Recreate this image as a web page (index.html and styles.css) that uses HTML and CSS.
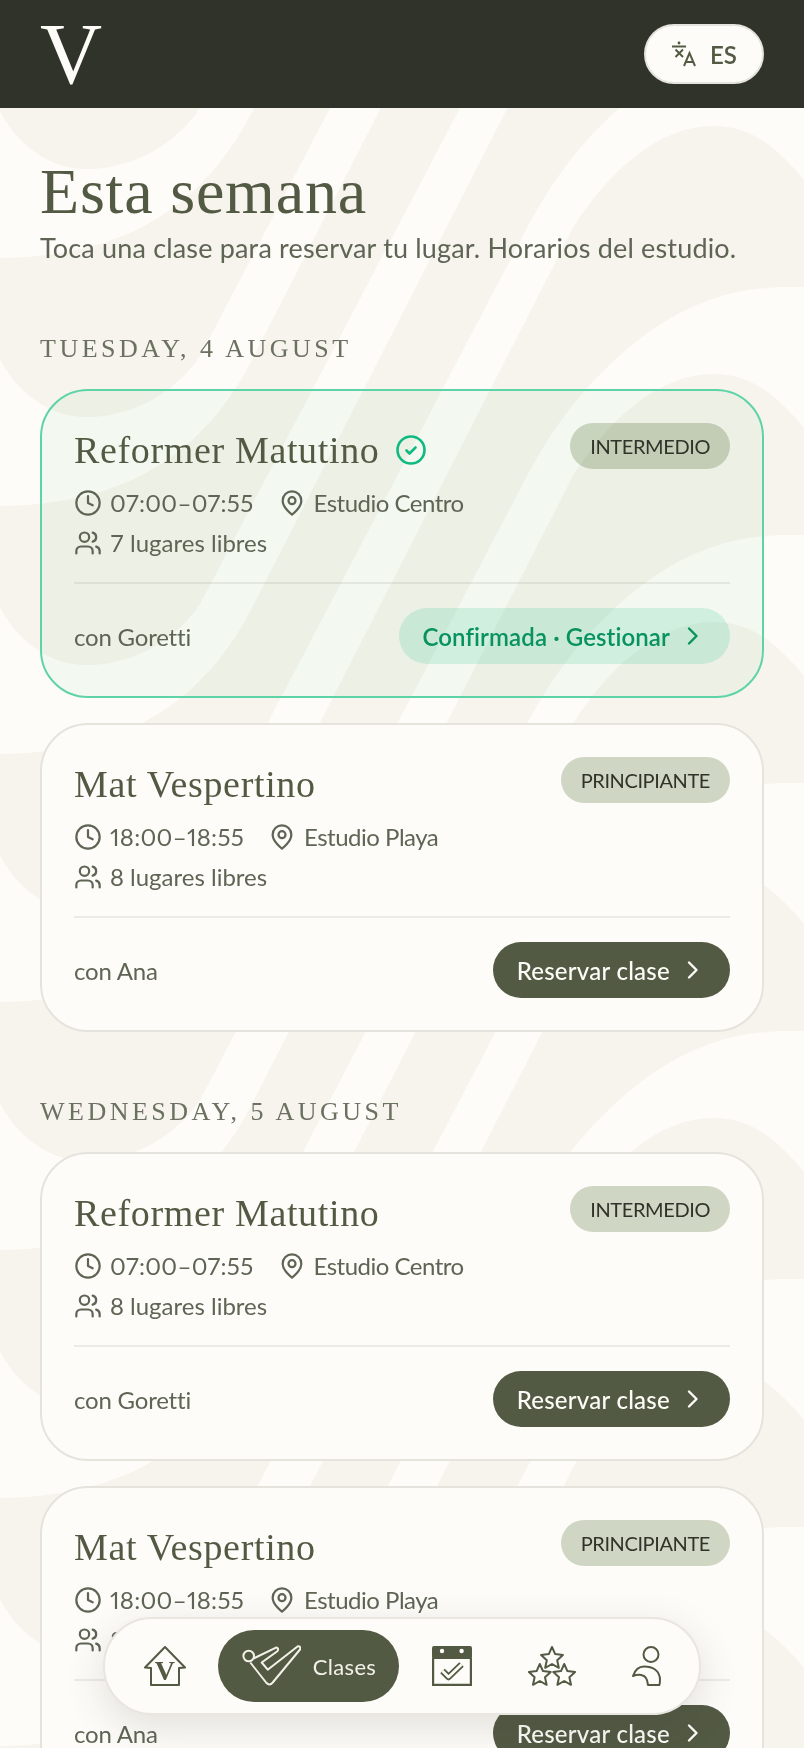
FILE: index.html
```html
<!DOCTYPE html>
<html lang="es">
<head>
<meta charset="UTF-8">
<meta name="viewport" content="width=device-width, initial-scale=1.0">
<title>Clases</title>
<link rel="stylesheet" href="styles.css">
</head>
<body>

<!-- background waves, one long ribbon repeated down the page -->
<svg class="bg-waves" width="804" height="1748" aria-hidden="true">
  <defs>
    <path id="ribbon" d="M830 39 L790 39 C720 39 660 62 590 137 C560 170 545 195 528 226 L200 852 C175 890 130 913 87 913 C50 913 15 890 -5 845 L-5 1002 C100 1002 195 970 254 852 L574 226 C610 170 660 126 713 126 C755 126 785 150 830 215 Z"/>
    <pattern id="wavePattern" width="804" height="248" patternUnits="userSpaceOnUse">
      <rect class="wave-base" width="804" height="248"/>
      <use class="wave-ribbon" href="#ribbon"/>
      <use class="wave-ribbon" href="#ribbon" y="-248"/>
      <use class="wave-ribbon" href="#ribbon" y="-496"/>
      <use class="wave-ribbon" href="#ribbon" y="-744"/>
      <use class="wave-ribbon" href="#ribbon" y="-992"/>
    </pattern>
  </defs>
  <rect width="804" height="1748" fill="url(#wavePattern)"/>
</svg>

<!-- shared icons -->
<svg class="icon-defs" width="0" height="0" aria-hidden="true">
  <symbol id="i-clock" viewBox="0 0 24 24"><circle cx="12" cy="12" r="10"/><path d="M12 6v6l4 2"/></symbol>
  <symbol id="i-pin" viewBox="0 0 24 24"><path d="M20 10c0 6-8 12-8 12s-8-6-8-12a8 8 0 0 1 16 0Z"/><circle cx="12" cy="10" r="3"/></symbol>
  <symbol id="i-users" viewBox="0 0 24 24"><path d="M16 21v-2a4 4 0 0 0-4-4H6a4 4 0 0 0-4 4v2"/><circle cx="9" cy="7" r="4"/><path d="M22 21v-2a4 4 0 0 0-3-3.87"/><path d="M16 3.13a4 4 0 0 1 0 7.75"/></symbol>
  <symbol id="i-chevron" viewBox="0 0 24 24"><path d="M8 4.5 15.5 12 8 19.5"/></symbol>
</svg>

<header class="topbar">
  <span class="logo">V</span>
  <button class="lang">
    <svg class="lang-icon" width="26" height="26" viewBox="0 0 26 26">
      <circle class="lang-dot" cx="8" cy="2" r="1.4"/>
      <path d="M1 5.5h14M4.5 8.5l7.5 7.5M12 8.5l-7.5 7.5M13 25l5.5-13L24 25M14.8 21h7.4"/>
    </svg>
    ES
  </button>
</header>

<main class="content">
  <h1 class="page-title">Esta semana</h1>
  <p class="page-sub">Toca una clase para reservar tu lugar. Horarios del estudio.</p>

  <section class="day">
    <h2 class="day-title">Tuesday, 4 August</h2>

    <article class="card card-booked">
      <div class="card-head">
        <h3 class="card-title">Reformer Matutino
          <svg class="booked-check" width="30" height="30" viewBox="0 0 30 30"><circle cx="15" cy="15" r="13.5"/><path d="M10.5 15.5l3 3 6-6"/></svg>
        </h3>
        <span class="chip">INTERMEDIO</span>
      </div>
      <div class="meta">
        <span class="meta-item meta-time"><svg class="icon"><use href="#i-clock"/></svg>07:00–07:55</span>
        <span class="meta-item meta-place"><svg class="icon"><use href="#i-pin"/></svg>Estudio Centro</span>
      </div>
      <div class="meta meta-second">
        <span class="meta-item"><svg class="icon"><use href="#i-users"/></svg>7 lugares libres</span>
      </div>
      <div class="card-foot">
        <span class="teacher">con Goretti</span>
        <a class="btn btn-booked">Confirmada · Gestionar<svg class="chevron"><use href="#i-chevron"/></svg></a>
      </div>
    </article>

    <article class="card">
      <div class="card-head">
        <h3 class="card-title">Mat Vespertino</h3>
        <span class="chip">PRINCIPIANTE</span>
      </div>
      <div class="meta">
        <span class="meta-item meta-time"><svg class="icon"><use href="#i-clock"/></svg>18:00–18:55</span>
        <span class="meta-item meta-place"><svg class="icon"><use href="#i-pin"/></svg>Estudio Playa</span>
      </div>
      <div class="meta meta-second">
        <span class="meta-item"><svg class="icon"><use href="#i-users"/></svg>8 lugares libres</span>
      </div>
      <div class="card-foot">
        <span class="teacher">con Ana</span>
        <a class="btn">Reservar clase<svg class="chevron"><use href="#i-chevron"/></svg></a>
      </div>
    </article>
  </section>

  <section class="day">
    <h2 class="day-title">Wednesday, 5 August</h2>

    <article class="card">
      <div class="card-head">
        <h3 class="card-title">Reformer Matutino</h3>
        <span class="chip">INTERMEDIO</span>
      </div>
      <div class="meta">
        <span class="meta-item meta-time"><svg class="icon"><use href="#i-clock"/></svg>07:00–07:55</span>
        <span class="meta-item meta-place"><svg class="icon"><use href="#i-pin"/></svg>Estudio Centro</span>
      </div>
      <div class="meta meta-second">
        <span class="meta-item"><svg class="icon"><use href="#i-users"/></svg>8 lugares libres</span>
      </div>
      <div class="card-foot">
        <span class="teacher">con Goretti</span>
        <a class="btn">Reservar clase<svg class="chevron"><use href="#i-chevron"/></svg></a>
      </div>
    </article>

    <article class="card">
      <div class="card-head">
        <h3 class="card-title">Mat Vespertino</h3>
        <span class="chip">PRINCIPIANTE</span>
      </div>
      <div class="meta">
        <span class="meta-item meta-time"><svg class="icon"><use href="#i-clock"/></svg>18:00–18:55</span>
        <span class="meta-item meta-place"><svg class="icon"><use href="#i-pin"/></svg>Estudio Playa</span>
      </div>
      <div class="meta meta-second">
        <span class="meta-item"><svg class="icon"><use href="#i-users"/></svg>8 lugares libres</span>
      </div>
      <div class="card-foot">
        <span class="teacher">con Ana</span>
        <a class="btn">Reservar clase<svg class="chevron"><use href="#i-chevron"/></svg></a>
      </div>
    </article>
  </section>
</main>

<nav class="tabbar">
  <a class="tab">
    <svg class="tab-icon" width="42" height="40" viewBox="0 0 42 40">
      <path d="M21 1 41 21.5 35 22V39H7V22L1 21.5Z"/>
      <text class="tab-v" x="21" y="34" text-anchor="middle">V</text>
    </svg>
  </a>
  <a class="tab tab-active">
    <svg class="tab-icon" width="60" height="42" viewBox="0 0 60 42">
      <circle cx="7.7" cy="11" r="5.3"/>
      <path d="M12.5 13.5 35 2.7C37 2 38 5 36 6.5L20.7 17.5 26.7 24.7 56.5 1.5C58.5 0.5 60 2.5 59 4.5L31.7 37.5C29.5 40 27.5 40 25.5 38L9.3 17.5"/>
    </svg>
    Clases
  </a>
  <a class="tab">
    <svg class="tab-icon" width="40" height="40" viewBox="0 0 40 40">
      <rect class="cal-top" x="0" y="0" width="40" height="13" rx="2"/>
      <circle class="cal-dot" cx="10" cy="5" r="2.2"/>
      <circle class="cal-dot" cx="29.6" cy="5" r="2.2"/>
      <path class="cal-frame" d="M1 12V39H39V12"/>
      <path class="cal-check" d="M10.5 25l6 6 13-12.5"/>
      <path class="cal-check-inner" d="M10.5 25l6 6 13-12.5"/>
    </svg>
  </a>
  <a class="tab">
    <svg class="tab-icon" width="48" height="40" viewBox="0 0 48 40">
      <polygon transform="translate(24 12.5)" points="0,-11.5 3.2,-4.4 10.9,-3.6 5.2,1.7 6.8,9.3 0,5.5 -6.8,9.3 -5.2,1.7 -10.9,-3.6 -3.2,-4.4"/>
      <polygon transform="translate(11.8 29.5)" points="0,-11.5 3.2,-4.4 10.9,-3.6 5.2,1.7 6.8,9.3 0,5.5 -6.8,9.3 -5.2,1.7 -10.9,-3.6 -3.2,-4.4"/>
      <polygon transform="translate(36.2 29.5)" points="0,-11.5 3.2,-4.4 10.9,-3.6 5.2,1.7 6.8,9.3 0,5.5 -6.8,9.3 -5.2,1.7 -10.9,-3.6 -3.2,-4.4"/>
    </svg>
  </a>
  <a class="tab">
    <svg class="tab-icon" width="30" height="40" viewBox="0 0 30 40">
      <circle cx="19" cy="8.5" r="7.5"/>
      <path d="M1 30C3 24 7 20.5 12 20.5 20 20.5 28 24 28 34 28 36 28 37.5 27.3 39H16C15.5 37 15.5 34.5 14 32 12.5 29 7 27.5 1 30Z"/>
    </svg>
  </a>
</nav>

</body>
</html>
```

FILE: styles.css
```css
html {
  background: #fefcf8;
}
body {
  margin: 0;
  height: 100vh;
  overflow: hidden;
  font-family: "Lato", "Open Sans", sans-serif;
  color: #5f6555;
}
.bg-waves {
  position: fixed;
  top: 0;
  left: 0;
  z-index: -1;
}
.wave-base {
  fill: #f7f3ed;
}
.wave-ribbon {
  fill: #fefcf8;
}
.icon-defs {
  position: absolute;
}

/* top bar */
.topbar {
  height: 108px;
  padding: 0 40px;
  display: flex;
  align-items: center;
  justify-content: space-between;
  background: #2f3329;
}
.logo {
  font-family: "Liberation Serif", serif;
  font-size: 86px;
  line-height: 1;
  color: #fefcf8;
}
.lang {
  width: 120px;
  height: 60px;
  display: flex;
  align-items: center;
  justify-content: center;
  gap: 13px;
  background: #fefcf8;
  border: 2px solid #e5e4dc;
  border-radius: 30px;
  font-family: inherit;
  font-size: 24px;
  font-weight: 600;
  color: #535a44;
}
.lang-icon {
  fill: none;
  stroke: #535a44;
  stroke-width: 2;
}
.lang-dot {
  fill: #535a44;
  stroke: none;
}

/* page heading */
.content {
  padding: 48px 40px 0;
}
.page-title {
  margin: 0;
  font-family: "Liberation Serif", serif;
  font-size: 64px;
  font-weight: 400;
  line-height: 72px;
  letter-spacing: 0.8px;
  color: #535a44;
}
.page-sub {
  margin: 2px 0 0;
  font-size: 27px;
  line-height: 36px;
  letter-spacing: 0.17px;
}

/* day groups */
.day {
  margin-top: 64px;
}
.day:first-of-type {
  margin-top: 67px;
}
.day-title {
  margin: 0 0 24px;
  font-family: "Liberation Serif", serif;
  font-size: 26px;
  font-weight: 400;
  line-height: 32px;
  letter-spacing: 3.5px;
  text-transform: uppercase;
  color: #6b7160;
}

/* class card */
.card {
  margin-bottom: 25px;
  padding: 32px;
  background: #fefcf8;
  border: 2px solid #e5e4dc;
  border-radius: 48px;
}
.card-booked {
  background: rgba(34, 197, 94, 0.05);
  border-color: #5fd3a8;
}
.card-head {
  display: flex;
  align-items: flex-start;
  justify-content: space-between;
}
.card-title {
  margin: 0;
  display: flex;
  align-items: center;
  gap: 17px;
  font-family: "Liberation Serif", serif;
  font-size: 38px;
  font-weight: 400;
  line-height: 54px;
  letter-spacing: 0.65px;
  color: #535a44;
}
.booked-check {
  fill: none;
  stroke: #10b981;
  stroke-width: 2.6;
  stroke-linecap: round;
  stroke-linejoin: round;
}
.chip {
  height: 46px;
  padding: 0 20px;
  display: flex;
  align-items: center;
  background: rgba(85, 111, 55, 0.27);
  border-radius: 23px;
  font-size: 20px;
  letter-spacing: -0.4px;
  color: #2f3329;
}
.meta {
  margin-top: 8px;
  display: flex;
  gap: 24px;
  font-size: 24px;
  line-height: 36px;
}
.meta-second {
  margin-top: 4px;
}
.meta-item {
  display: flex;
  align-items: center;
  gap: 8px;
}
.meta-time {
  font-variant-numeric: proportional-nums;
  letter-spacing: 0.3px;
}
.meta-place {
  letter-spacing: -0.5px;
}
.icon {
  width: 28px;
  height: 28px;
  fill: none;
  stroke: #5f6555;
  stroke-width: 1.9;
  stroke-linecap: round;
  stroke-linejoin: round;
}
.card-foot {
  margin-top: 21px;
  padding-top: 24px;
  display: flex;
  align-items: center;
  justify-content: space-between;
  border-top: 2px solid rgba(83, 90, 68, 0.1);
}
.teacher {
  font-size: 24px;
  letter-spacing: -0.2px;
}
.btn {
  height: 56px;
  padding: 0 25px 0 24px;
  display: flex;
  align-items: center;
  gap: 11px;
  background: #535a44;
  border-radius: 28px;
  font-size: 24px;
  font-weight: 500;
  letter-spacing: 0.25px;
  color: #fefcf8;
}
.btn-booked {
  background: rgba(16, 185, 129, 0.15);
  color: #07925f;
  font-weight: 600;
  letter-spacing: 0.1px;
}
.chevron {
  width: 24px;
  height: 24px;
  fill: none;
  stroke: currentColor;
  stroke-width: 2.4;
  stroke-linecap: round;
  stroke-linejoin: round;
}

/* floating tab bar */
.tabbar {
  position: fixed;
  left: 103px;
  bottom: 33px;
  width: 598px;
  height: 98px;
  box-sizing: border-box;
  padding-left: 24px;
  display: grid;
  grid-template-columns: 72px 181px 72px 94px 62px;
  column-gap: 17px;
  align-items: center;
  background: #fefcf8;
  border: 2px solid #e8e6df;
  border-radius: 49px;
  box-shadow: 0 12px 40px rgba(47, 51, 41, 0.14);
}
.tab {
  height: 72px;
  display: flex;
  align-items: center;
  justify-content: center;
  gap: 12px;
  font-size: 22px;
  letter-spacing: 0.3px;
}
.tab-active {
  background: #535a44;
  border-radius: 36px;
  color: #f3f1e8;
}
.tab-icon {
  fill: none;
  stroke: #535a44;
  stroke-width: 2;
  stroke-linejoin: round;
}
.tab-active .tab-icon {
  stroke: #f3f1e8;
}
.tab-v {
  font-family: "Liberation Serif", serif;
  font-size: 28px;
  font-weight: 700;
  fill: #535a44;
  stroke: none;
}
.cal-top {
  fill: #535a44;
  stroke: none;
}
.cal-check {
  stroke: #535a44;
  stroke-width: 6.4;
}
.cal-check-inner {
  stroke: #fefcf8;
  stroke-width: 2.8;
}
.cal-dot {
  fill: #fefcf8;
  stroke: none;
}
.cal-frame {
  stroke-width: 2.4;
}
```
